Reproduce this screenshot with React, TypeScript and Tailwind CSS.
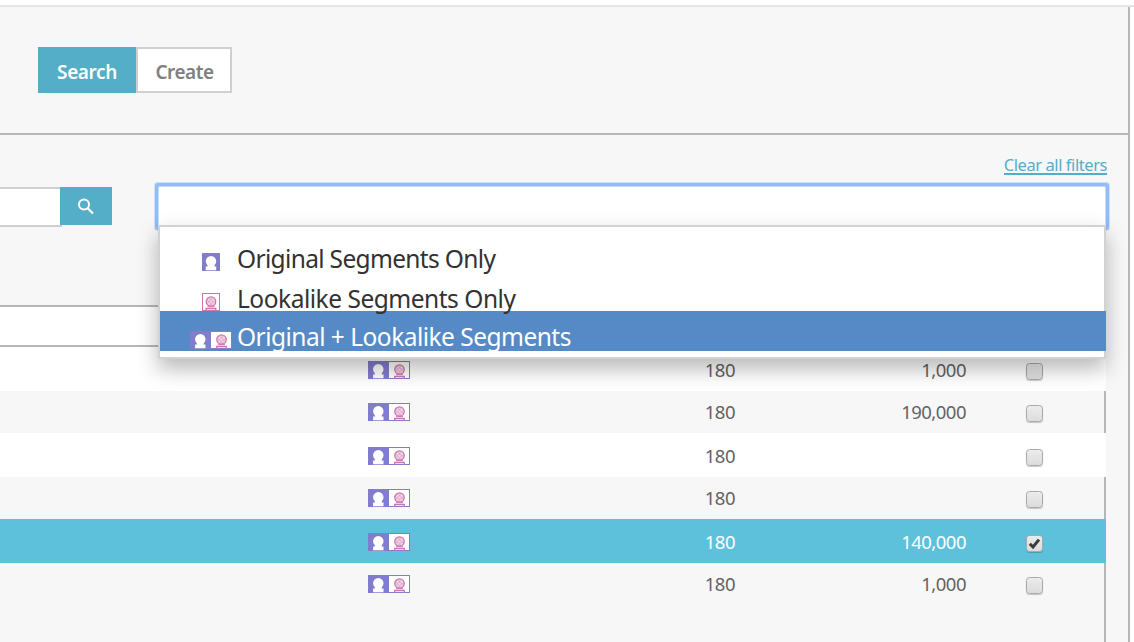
import { clsx } from "clsx";

function Person({ x }: { x: number }) {
  return (
    <g fill="#fff">
      <circle cx={x} cy="8.2" r="5.2" />
      <path d={`M${x - 3.4} 10h6.8v3.6h1.8v3.7h-10.4v-3.7h1.8z`} />
    </g>
  );
}

function Lookalike({ x }: { x: number }) {
  return (
    <g fill="none" stroke="#cf74b0" strokeWidth="1.3">
      <circle cx={x} cy="8.5" r="4.7" fill="#efcfe2" />
      <path d={`M${x - 3.5} 7.5l5 5M${x - 1.5} 5.2l5 5M${x + 3.5} 7.5l-5 5M${x + 1.5} 5.2l-5 5`} strokeWidth=".6" strokeOpacity=".6" />
      <path d={`M${x - 4.8} 18v-2.5h9.6V18`} />
      <path d={`M${x - 3.5} 13.7h7`} strokeWidth="1" />
    </g>
  );
}

function OriginalIcon() {
  return (
    <svg width="18" height="18" viewBox="0 0 18 18" className="block">
      <rect width="18" height="18" rx=".5" fill="#827ccc" />
      <Person x={9} />
    </svg>
  );
}

function LookalikeIcon() {
  return (
    <svg width="18" height="18" viewBox="0 0 18 18" className="block">
      <rect x=".5" y=".5" width="17" height="17" fill="#fff" stroke="#cf74b0" />
      <Lookalike x={9} />
    </svg>
  );
}

function BothIcon() {
  return (
    <svg width="42" height="18" viewBox="0 0 42 18" className="block">
      <rect x=".5" y=".5" width="41" height="17" fill="#fff" stroke="#827ccc" />
      <rect width="21" height="18" fill="#827ccc" />
      <Person x={10.3} />
      <Lookalike x={31.5} />
    </svg>
  );
}

function Checkbox({ checked }: { checked?: boolean }) {
  return (
    <span className="block h-[17px] w-[17px] rounded-[3.5px] border border-[#a9a9a9] bg-linear-to-b from-[#ececec] to-[#dcdcdc] shadow-[0_1px_1px_rgba(0,0,0,0.2)]">
      {checked && (
        <svg width="15" height="15" viewBox="0 0 15 15" className="block">
          <path d="M2.8 7.8l3.2 3.2 6-7.4" fill="none" stroke="#3c3c3c" strokeWidth="3" />
        </svg>
      )}
    </span>
  );
}

type Row = { size: string; tone: "white" | "gray" | "selected"; tall?: boolean };

const rows: Row[] = [
  { size: "1,000", tone: "white", tall: true },
  { size: "190,000", tone: "gray" },
  { size: "", tone: "white", tall: true },
  { size: "", tone: "gray" },
  { size: "140,000", tone: "selected", tall: true },
  { size: "1,000", tone: "gray" },
];

function SegmentRow({ row }: { row: Row }) {
  return (
    <div
      className={clsx(
        "flex items-end text-[18.5px] leading-[42px] tracking-[-0.52px]",
        row.tall ? "h-11" : "h-[42px]",
        row.tone === "white" && "bg-white text-[#636363]",
        row.tone === "gray" && "border-r-2 border-[#b6b6b6] text-[#636363]",
        row.tone === "selected" && "bg-[#5ec1dc] text-white",
      )}
    >
      <div className="w-[368px] shrink-0" />
      <div className="w-[42px] shrink-0 pb-3">
        <BothIcon />
      </div>
      <div className="w-[325px] shrink-0 text-right">180</div>
      <div className="h-[42px] w-[231px] shrink-0 text-right">{row.size}</div>
      <div className="ml-[60px] shrink-0 pb-[11px]">
        <Checkbox checked={row.tone === "selected"} />
      </div>
    </div>
  );
}

export default function App() {
  return (
    <div className="h-[642px] w-[1134px] overflow-hidden bg-white pt-[5px] font-['Noto_Sans',sans-serif]">
      <div className="h-[2px] bg-[#e6e6e6]" />
      <div className="h-[635px] w-[1130px] border-r-2 border-[#b6b6b6] bg-[#f7f7f7]">
        <div className="flex h-32 border-b-2 border-[#b6b6b6] pt-10 pl-[38px] text-[19px] font-semibold">
          <button className="h-[46px] w-[98px] bg-[#54aec7] pt-1 tracking-[-0.4px] text-white">Search</button>
          <button className="h-[46px] w-24 border-2 border-[#cfcfcf] bg-white pt-1 pl-px tracking-[-0.5px] text-[#808080]">Create</button>
        </div>
        <div className="flex h-[47px] justify-end pt-5 pr-[21px]">
          <a className="h-5 border-b-2 border-[#54aec7] text-[16.5px] leading-5 tracking-[-0.43px] whitespace-nowrap text-[#54aec7]">
            Clear all filters
          </a>
        </div>
        <div className="flex h-[123px] pt-[5px]">
          <div className="h-10 w-[62px] border-y-2 border-[#cfcfcf] bg-white" />
          <button className="-ml-[2px] flex h-[38px] w-[52px] items-center justify-center bg-[#54aec7]">
            <svg width="18" height="18" viewBox="0 0 18 18" fill="none" stroke="#fff">
              <circle cx="7" cy="7.5" r="5" strokeWidth="2" />
              <path d="M10.7 11.2l5.3 5.3" strokeWidth="2.2" />
            </svg>
          </button>
          <div className="relative ml-[47px] h-[39px] w-[946px] rounded-[1px] bg-white shadow-[0_0_0_1px_#c9ddfb,0_0_0_4px_#92bcf7,0_0_0_5px_#cfe0fa]">
            <div className="absolute top-[38px] -left-px z-10 h-[134px] w-[948px] border-2 border-[#d2d2d2] bg-white pt-[13px] text-[24.5px] tracking-[-0.66px] text-[#323232] shadow-[0_10px_20px_rgba(0,0,0,0.28)]">
              <div className="flex h-10 items-center pl-[42px]">
                <div className="w-[35px] pt-[3px]"><OriginalIcon /></div>
                <span className="relative z-10 -mt-[2px] whitespace-nowrap">Original Segments Only</span>
              </div>
              <div className="flex h-[31px] items-start pl-[42px]">
                <div className="w-[35px] pt-[13px]"><LookalikeIcon /></div>
                <span className="relative z-10 leading-[38px] tracking-[-0.48px] whitespace-nowrap">Lookalike Segments Only</span>
              </div>
              <div className="-mr-[2px] flex h-10 items-start bg-[#558ac6] pl-[30px] text-white">
                <div className="w-[47px] pt-5"><BothIcon /></div>
                <span className="leading-[51px] tracking-[-0.52px] whitespace-nowrap">Original + Lookalike Segments</span>
              </div>
            </div>
          </div>
        </div>
        <div className="w-[1106px]">
          <div className="h-[42px] border-y-2 border-[#b6b6b6] bg-white" />
          {rows.map((row, i) => (
            <SegmentRow key={i} row={row} />
          ))}
          <div className="h-10 border-r-2 border-[#b6b6b6]" />
        </div>
      </div>
    </div>
  );
}
